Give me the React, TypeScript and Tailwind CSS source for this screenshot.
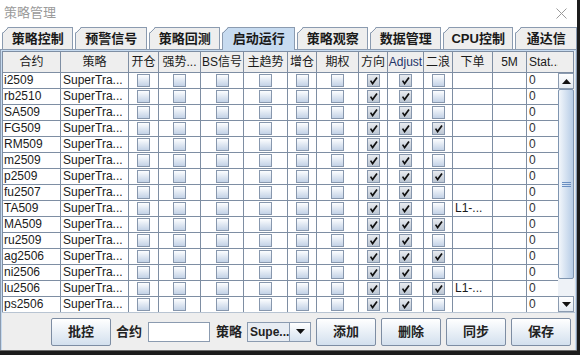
import React from 'react';

const rows = [
  'i2509', 'rb2510', 'SA509', 'FG509', 'RM509', 'm2509', 'p2509', 'fu2507',
  'TA509', 'MA509', 'ru2509', 'ag2506', 'ni2506', 'lu2506', 'ps2506',
];
const erlang = new Set(['FG509', 'p2509', 'MA509', 'ag2506', 'lu2506']);
const order = new Set(['TA509', 'lu2506']);

const headers = ['合约', '策略', '开仓', '强势...', 'BS信号', '主趋势', '增仓', '期权', '方向', 'Adjust', '二浪', '下单', '5M', 'Stat...'];
const tabs: [string, number][] = [
  ['策略控制', 72], ['预警信号', 72], ['策略回测', 72], ['启动运行', 73],
  ['策略观察', 72], ['数据管理', 71], ['CPU控制', 71], ['通达信', 62],
];

const gridCols = 'grid grid-cols-[58px_68px_30px_42px_43px_44px_29px_42px_29px_36px_29px_40px_34px_32px]';

function Check({ checked }: { checked: boolean }) {
  return (
    <div
      className={`w-[13px] h-[13px] border border-[#8797ad] flex items-center justify-center ${
        checked ? 'bg-linear-to-b from-[#e9ecf0] to-[#bcc6d3]' : 'bg-linear-to-b from-[#fdfeff] to-[#c3d2e6]'
      }`}
    >
      {checked && (
        <svg width="9" height="9" viewBox="0 0 9 9">
          <path d="M1.6 4.6 L3.6 7.6 L8 1.4" stroke="#111" strokeWidth="1.7" fill="none" />
        </svg>
      )}
    </div>
  );
}

function Tab({ label, w, selected }: { label: string; w: number; selected: boolean }) {
  return (
    <div
      style={{ width: w }}
      className={`relative h-[22px] border-t border-l border-r border-[#8b9bb0] flex items-center justify-center text-[13px] font-bold text-[#1a1a1a] ${
        selected ? 'bg-[#c7dbf0] h-[23px] -mb-px z-10' : 'bg-[#eeeeee]'
      }`}
    >
      <svg className="absolute -top-px -left-px" width="7" height="7" viewBox="0 0 7 7">
        <polygon points="0,0 6,0 0,6" fill="#ffffff" />
        <line x1="0.5" y1="6.5" x2="6.5" y2="0.5" stroke="#8b9bb0" strokeWidth="1" />
      </svg>
      {label}
    </div>
  );
}

function Btn({ label, className = '' }: { label: string; className?: string }) {
  return (
    <div
      className={`w-[60px] h-[28px] border border-[#7d8da3] rounded-[2px] bg-linear-to-b from-[#ffffff] to-[#d3e0ee] flex items-center justify-center text-[13px] font-bold text-[#222] ${className}`}
    >
      {label}
    </div>
  );
}

export default function App() {
  return (
    <div className="w-[580px] h-[355px] bg-[#1c1c1c] font-['Liberation_Sans','Noto_Sans_CJK_SC',sans-serif]">
      <div className="w-[577px] h-[351px] bg-white flex flex-col border-b border-[#6b6b6b] overflow-hidden">
        {/* title bar */}
        <div className="h-[26px] flex items-center justify-between pl-[4px] pr-[10px] shrink-0">
          <span className="text-[13px] text-[#9a9a9a]">策略管理</span>
          <svg width="11" height="11" viewBox="0 0 11 11">
            <path d="M0.5 0.5 L10.5 10.5 M10.5 0.5 L0.5 10.5" stroke="#9a9a9a" strokeWidth="1" />
          </svg>
        </div>
        {/* tabs */}
        <div className="h-[23px] flex items-end gap-[2px] pl-[2px] shrink-0">
          {tabs.map(([t, w]) => (
            <Tab key={t} label={t} w={w} selected={t === '启动运行'} />
          ))}
        </div>
        {/* panel */}
        <div className="flex-1 flex flex-col border-t border-l border-r border-[#8b9bb0] bg-[#c7dbf0] pt-px px-px min-h-0">
          <div className="flex flex-col bg-[#eeeeee] flex-1 min-h-0">
            {/* table area */}
            <div className="flex">
              <div className="w-[556px] border-l border-[#7e8ea3]">
                <div className={`${gridCols} h-[22px] border-t border-b border-[#7e8ea3] bg-[#eeeeee]`}>
                  {headers.map((h) => (
                    <div
                      key={h}
                      className={`border-r border-[#7e8ea3] flex items-center justify-center text-[12px] whitespace-nowrap overflow-hidden ${
                        h === 'Adjust' ? 'text-[#1f3468]' : 'text-[#1a1a1a]'
                      } ${h === 'Stat...' ? 'justify-start pl-[2px]' : ''}`}
                    >
                      {h}
                    </div>
                  ))}
                </div>
                <div className="h-[239px] overflow-hidden bg-white">
                  {rows.map((r) => (
                    <div key={r} className={`${gridCols} h-[16px] border-b border-[#7e8ea3]`}>
                      <div className="border-r border-[#7e8ea3] text-[12px] leading-[15px] pl-[1px] text-[#1a1a1a]">{r}</div>
                      <div className="border-r border-[#7e8ea3] text-[12px] leading-[15px] pl-[2px] text-[#1a1a1a] whitespace-nowrap overflow-hidden">SuperTra...</div>
                      {[0, 1, 2, 3, 4, 5].map((i) => (
                        <div key={i} className="border-r border-[#7e8ea3] flex items-center justify-center">
                          <Check checked={false} />
                        </div>
                      ))}
                      <div className="border-r border-[#7e8ea3] flex items-center justify-center">
                        <Check checked />
                      </div>
                      <div className="border-r border-[#7e8ea3] flex items-center justify-center">
                        <Check checked />
                      </div>
                      <div className="border-r border-[#7e8ea3] flex items-center justify-center">
                        <Check checked={erlang.has(r)} />
                      </div>
                      <div className="border-r border-[#7e8ea3] text-[12px] leading-[15px] pl-[2px] text-[#1a1a1a] whitespace-nowrap">
                        {order.has(r) ? 'L1-...' : ''}
                      </div>
                      <div className="border-r border-[#7e8ea3]" />
                      <div className="border-r border-[#7e8ea3] text-[12px] leading-[15px] pl-[2px] text-[#333]">0</div>
                    </div>
                  ))}
                </div>
              </div>
              {/* scrollbar column */}
              <div className="w-[16px] flex flex-col">
                <div className="h-[22px] bg-[#eeeeee] border-t border-b border-r border-[#7e8ea3]" />
                <div className="h-[239px] flex flex-col bg-[#eef2f7]">
                  <div className="h-[16px] border border-[#8b9bb0] bg-linear-to-b from-white to-[#e4ebf3] flex items-center justify-center">
                    <svg width="9" height="5" viewBox="0 0 9 5"><polygon points="0,5 9,5 4.5,0" fill="#111" /></svg>
                  </div>
                  <div className="h-[190px] border border-[#7f95b0] rounded-[2px] bg-linear-to-r from-[#f2f6fb] to-[#b6cce6] flex items-center justify-center">
                    <svg width="9" height="7" viewBox="0 0 9 7">
                      <path d="M0 1.5 H9 M0 3.5 H9 M0 5.5 H9" stroke="#6a8fc2" strokeWidth="1" />
                    </svg>
                  </div>
                  <div className="flex-1" />
                  <div className="h-[16px] border border-[#8b9bb0] bg-linear-to-b from-white to-[#e4ebf3] flex items-center justify-center">
                    <svg width="9" height="5" viewBox="0 0 9 5"><polygon points="0,0 9,0 4.5,5" fill="#111" /></svg>
                  </div>
                </div>
              </div>
            </div>
            {/* bottom controls */}
            <div className="flex-1 flex items-center border-t border-[#b8c4d2] pl-[49px] bg-[#eeeeee]">
              <Btn label="批控" />
              <span className="ml-[5px] text-[13px] font-bold text-[#222]">合约</span>
              <div className="ml-[6px] w-[62px] h-[20px] border border-[#8b9bb0] bg-white" />
              <span className="ml-[6px] text-[13px] font-bold text-[#222]">策略</span>
              <div className="ml-[5px] w-[64px] h-[20px] flex border border-[#8b9bb0] bg-white">
                <div className="flex-1 flex items-center pl-[2px] text-[12px] font-bold text-[#222] bg-[#e8edf3] border-r border-[#8b9bb0]">Supe...</div>
                <div className="w-[20px] flex items-center justify-center bg-linear-to-b from-white to-[#d6e2ef]">
                  <svg width="9" height="5" viewBox="0 0 9 5"><polygon points="0,0 9,0 4.5,5" fill="#111" /></svg>
                </div>
              </div>
              <Btn label="添加" className="ml-[5px]" />
              <Btn label="删除" className="ml-[5px]" />
              <Btn label="同步" className="ml-[5px]" />
              <Btn label="保存" className="ml-[5px]" />
            </div>
          </div>
        </div>
      </div>
    </div>
  );
}
